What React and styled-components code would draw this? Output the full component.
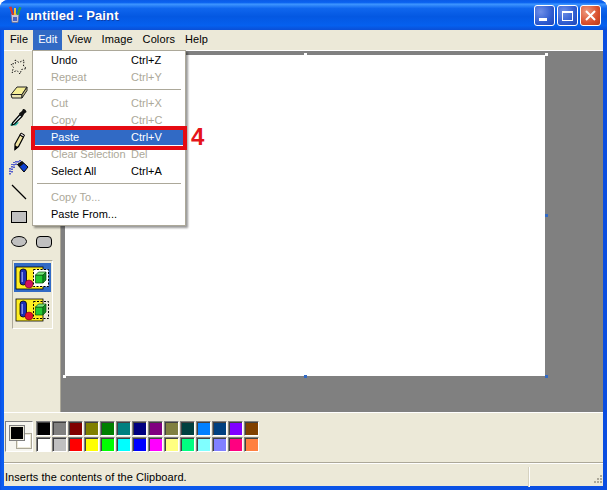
import styled, { createGlobalStyle } from "styled-components";

const GlobalStyle = createGlobalStyle`
  html, body {
    margin: 0;
    background: #fff;
  }
  * {
    box-sizing: border-box;
  }
`;

const Window = styled.div`
  position: relative;
  width: 607px;
  height: 490px;
  display: flex;
  flex-direction: column;
  overflow: hidden;
  border-radius: 8px 8px 0 0;
  font-family: "Liberation Sans", Arial, sans-serif;
  font-size: 11px;
  color: #000;
  background: linear-gradient(90deg, #0a4de0 0, #0a5cf0 2px, #0a4de0 100%);
  padding: 0 4px 4px;
`;

const TitleBar = styled.div`
  height: 30px;
  margin: 0 -4px;
  padding: 0 6px 0 7px;
  display: flex;
  align-items: center;
  gap: 2px;
  background: linear-gradient(
    180deg,
    #0a5be8 0%,
    #0a62f0 8%,
    #3d95ff 14%,
    #0f66ee 28%,
    #0458e2 55%,
    #0560ef 85%,
    #0a4fd6 100%
  );
`;

const Title = styled.span`
  flex: 1;
  margin-left: 1px;
  color: #fff;
  font-size: 13px;
  font-weight: bold;
  letter-spacing: 0.15px;
  text-shadow: 1px 1px 0 #0f3fa8;
`;

const CaptionButton = styled.div`
  width: 21px;
  height: 21px;
  border: 1px solid #fff;
  border-radius: 3px;
  display: flex;
  align-items: center;
  justify-content: center;
  background: ${(p) =>
    p.$close
      ? "radial-gradient(circle at 30% 30%, #ee9a80, #d9502d 60%, #b83a18)"
      : "radial-gradient(circle at 30% 30%, #6f8fe8, #2f5cd0 60%, #2046b8)"};
`;

const MenuBar = styled.div`
  height: 20px;
  display: flex;
  background: #ece9d8;
  padding-left: 1px;
`;

const MenuItem = styled.div`
  height: 20px;
  padding: 0 5px;
  line-height: 19px;
  font-size: 11px;
  letter-spacing: 0.1px;
  color: ${(p) => (p.$active ? "#fff" : "#000")};
  background: ${(p) => (p.$active ? "#316ac5" : "transparent")};
`;

const Workspace = styled.div`
  flex: 1;
  min-height: 0;
  display: flex;
  background: #ece9d8;
  border-top: 1px solid #fff;
`;

const Toolbox = styled.div`
  width: 57px;
  padding: 3px 0 0 2px;
  border-right: 1px solid #aca899;
  display: flex;
  flex-direction: column;
  align-items: flex-start;
`;

const ToolGrid = styled.div`
  display: grid;
  grid-template-columns: 25px 25px;
  grid-auto-rows: 25px;
`;

const Tool = styled.div`
  width: 25px;
  height: 25px;
  display: flex;
  align-items: center;
  justify-content: center;
`;

const OptionsBox = styled.div`
  width: 41px;
  height: 69px;
  margin: 6px 0 0 6px;
  padding: 2px 1px;
  border: 1px solid #aca899;
  border-right-color: #fff;
  border-bottom-color: #fff;
  display: flex;
  flex-direction: column;
  gap: 3px;
`;

const Option = styled.div`
  height: 29px;
  display: flex;
  align-items: center;
  justify-content: center;
  background: ${(p) => (p.$selected ? "#316ac5" : "transparent")};
`;

const CanvasArea = styled.div`
  flex: 1;
  background: #808080;
  padding: 4px 0 0 4px;
`;

const Canvas = styled.div`
  position: relative;
  width: 480px;
  height: 321px;
  background: #fff;
`;

const Handle = styled.span`
  position: absolute;
  width: 3px;
  height: 3px;
  background: ${(p) => (p.$blue ? "#316ac5" : "#fff")};
  left: ${(p) => p.$x}px;
  top: ${(p) => p.$y}px;
`;

const PaletteBar = styled.div`
  height: 50px;
  background: #ece9d8;
  border-top: 1px solid #fff;
  padding: 8px 0 0 1px;
  display: flex;
  gap: 3px;
`;

const CurrentColors = styled.div`
  position: relative;
  width: 28px;
  height: 31px;
  border: 1px solid #808080;
  border-right-color: #fff;
  border-bottom-color: #fff;
  background-color: #f6f5ee;
  background-image: radial-gradient(#d8d5c6 0.5px, transparent 0.7px);
  background-size: 2px 2px;
`;

const ForeColor = styled.div`
  position: absolute;
  left: 4px;
  top: 4px;
  width: 14px;
  height: 14px;
  background: #000;
  border: 1px solid #ece9d8;
  outline: 1px solid #808080;
  z-index: 1;
`;

const BackColor = styled.div`
  position: absolute;
  left: 11px;
  top: 12px;
  width: 14px;
  height: 14px;
  background: #fff;
  border: 1px solid #ece9d8;
  outline: 1px solid #aca899;
`;

const Swatches = styled.div`
  display: grid;
  grid-template-columns: repeat(14, 16px);
  grid-auto-rows: 16px;
`;

const Swatch = styled.div`
  width: 15px;
  height: 15px;
  background: ${(p) => p.$color};
  border: 1px solid #808080;
  border-right-color: #fff;
  border-bottom-color: #fff;
  box-shadow: inset 1px 1px 0 #404040;
`;

const StatusBar = styled.div`
  position: relative;
  height: 24px;
  background: #ece9d8;
  border-top: 1px solid #aca899;
  box-shadow: inset 0 1px 0 #fff;
  display: flex;
  align-items: center;
  padding: 4px 0 0 1px;
  font-size: 11px;
  letter-spacing: 0.05px;
`;

const StatusText = styled.span`
  flex: 1;
`;

const StatusDivider = styled.div`
  width: 1px;
  height: 20px;
  background: #fff;
  margin-right: 73px;
  box-shadow: -1px 0 0 #d6d2c0;
`;

const Grip = styled.svg`
  position: absolute;
  right: 0;
  bottom: 1px;
`;

const DropMenu = styled.div`
  position: absolute;
  left: 32px;
  top: 50px;
  width: 154px;
  height: 176px;
  padding: 0 2px;
  background: #fff;
  border: 1px solid #aca899;
  box-shadow: 2px 2px 2px rgba(0, 0, 0, 0.4);
  z-index: 2;
`;

const DropItem = styled.div`
  height: 17px;
  display: grid;
  grid-template-columns: 80px 1fr;
  align-items: center;
  padding-left: 16px;
  font-size: 11px;
  white-space: nowrap;
  color: ${(p) => (p.$active ? "#fff" : p.$disabled ? "#aca899" : "#000")};
  background: ${(p) => (p.$active ? "#316ac5" : "transparent")};
`;

const DropSeparator = styled.div`
  height: 1px;
  margin: 4px 2px;
  background: #aca899;
`;

const Highlight = styled.div`
  position: absolute;
  left: 31px;
  top: 126px;
  width: 156px;
  height: 24px;
  border: 4px solid #e50a12;
  z-index: 3;
`;

const StepNumber = styled.div`
  position: absolute;
  left: 191px;
  top: 123px;
  font-size: 24px;
  line-height: 28px;
  font-weight: bold;
  color: #e5141a;
  z-index: 3;
`;

const PaintLogo = () => (
  <svg width="16" height="18" viewBox="0 0 16 18">
    <path d="M4 8h8l-1 8.500H5z" fill="#c9c6d8" stroke="#6a6a88" strokeWidth="0.700" />
    <path d="M5 9 2 1l2.500-.5L7 9z" fill="#d9342b" />
    <path d="M7 9V2h2v7z" fill="#f2c230" />
    <path d="M9.500 9 12 1l2.500.5L11.500 9z" fill="#33a045" />
    <path d="M6 11h4v4H6z" fill="#4a62c0" />
  </svg>
);

const SelectIcon = () => (
  <svg width="18" height="18" viewBox="0 0 18 18">
    <path
      d="M5 2l4 2.500L14 2l-.5 6 3 2.500-5 1L10 16l-3-3.500-5 2 1.500-5L1 6l4.500-.5z"
      fill="none"
      stroke="#000"
      strokeWidth="0.900"
      strokeDasharray="1.500 1.500"
    />
  </svg>
);

const EraserIcon = () => (
  <svg width="18" height="14" viewBox="0 0 18 14">
    <path d="M1 9.500 7 2h10l-5 7.500z" fill="#f6ef96" stroke="#222" />
    <path d="M1 9.500h11V13H2z" fill="#ece6b4" stroke="#222" />
    <path d="M12 9.500 17 2v3.500L12 13z" fill="#c9c28c" stroke="#222" />
  </svg>
);

const PickerIcon = () => (
  <svg width="18" height="18" viewBox="0 0 18 18">
    <path d="M0 17.500c1-3.500 4-3.500 9-3l-3 3z" fill="#20b8a4" />
    <path d="M2.500 15 10 6.500l2 2-7.500 7.500-2.500 1z" fill="#e8f6f4" stroke="#000" strokeWidth="1.200" />
    <path d="M9.500 5 12 3l1-2c1.500-.5 3.500 1.500 3.500 3l-2 1.500-1.500 2.500-1 .5-3-3z" fill="#111" />
  </svg>
);

const PencilIcon = () => (
  <svg width="14" height="20" viewBox="0 0 14 20">
    <path d="M3 12 8 3l3.500 2-5 9.500-3.500 3z" fill="#efe2a0" stroke="#000" strokeWidth="1.200" />
    <path d="M8 3l1-2 3.500 2-1 2z" fill="#e8e0e0" stroke="#000" />
    <path d="M2.500 18.500l.5-5 3 1.500z" fill="#000" />
  </svg>
);

const SprayIcon = () => (
  <svg width="20" height="16" viewBox="0 0 20 16">
    <path
      d="M1 15.500V8M3 13.500V5M5 9V3M7 6V1.500M9 3.500V1M11 2.500V1"
      stroke="#2430c8"
      strokeWidth="1.500"
      strokeDasharray="1.500 1"
    />
    <path d="M8.500 5.500 13 2.500l6 5.500-4 5z" fill="#0c3fd0" stroke="#000" />
    <path d="M8.500 5.500 13 2.500l2 2-4.500 3.500z" fill="#111" />
  </svg>
);

const LineIcon = () => (
  <svg width="16" height="16" viewBox="0 0 16 16">
    <path d="M1 1l14 14" stroke="#000" strokeWidth="1.300" />
  </svg>
);

const RectIcon = () => (
  <svg width="16" height="12" viewBox="0 0 16 12">
    <rect x="0.500" y="0.500" width="15" height="11" fill="#c0c0c0" stroke="#000" />
  </svg>
);

const EllipseIcon = () => (
  <svg width="16" height="11" viewBox="0 0 16 11">
    <ellipse cx="8" cy="5.500" rx="7.500" ry="5" fill="#c0c0c0" stroke="#000" />
  </svg>
);

const RoundRectIcon = () => (
  <svg width="16" height="12" viewBox="0 0 16 12">
    <rect x="0.500" y="0.500" width="15" height="11" rx="3.500" fill="#c0c0c0" stroke="#000" />
  </svg>
);

const TransparencyIcon = ({ dashed }) => (
  <svg width="36" height="26" viewBox="0 0 36 26">
    <rect x="1" y="2" width="27" height="22" fill="#ffee22" stroke="#000" strokeWidth="0.800" />
    <rect x="5" y="4" width="6.500" height="16" rx="3" fill="#1c2fb4" stroke="#000" strokeWidth="0.800" />
    <rect x="6.500" y="7" width="1.500" height="10" fill="#8090e8" />
    <circle cx="14" cy="19" r="4" fill={dashed ? "#e01030" : "#d01060"} stroke="#600" strokeWidth="0.500" />
    <rect
      x="18.500"
      y="4.500"
      width="15"
      height="17"
      fill={dashed ? "none" : "#fff"}
      stroke="#000"
      strokeWidth="1"
      strokeDasharray="2 1.500"
    />
    <path d="M20.500 10h7.500v8h-7.500z" fill="#22c832" stroke="#0a5010" strokeWidth="0.700" />
    <path d="M20.500 10l3-3H31l-3 3z" fill="#7ee87e" stroke="#0a5010" strokeWidth="0.700" />
    <path d="M28 10l3-3v8l-3 3z" fill="#109020" stroke="#0a5010" strokeWidth="0.700" />
  </svg>
);

const TOP_COLORS = [
  "#000000", "#808080", "#800000", "#808000", "#008000", "#008080", "#000080",
  "#800080", "#808040", "#004040", "#0080ff", "#004080", "#8000ff", "#804000",
];

const BOTTOM_COLORS = [
  "#ffffff", "#c0c0c0", "#ff0000", "#ffff00", "#00ff00", "#00ffff", "#0000ff",
  "#ff00ff", "#ffff80", "#00ff80", "#80ffff", "#8080ff", "#ff0080", "#ff8040",
];

const HANDLES = [
  { x: -2, y: -2 },
  { x: 239, y: -2 },
  { x: 480, y: -2 },
  { x: 480, y: 159, blue: true },
  { x: -2, y: 320 },
  { x: 239, y: 320, blue: true },
  { x: 480, y: 320, blue: true },
  { x: -2, y: 159, blue: true },
];

function EditMenu() {
  return (
    <DropMenu>
      <DropItem>
        <span>Undo</span>
        <span>Ctrl+Z</span>
      </DropItem>
      <DropItem $disabled>
        <span>Repeat</span>
        <span>Ctrl+Y</span>
      </DropItem>
      <DropSeparator />
      <DropItem $disabled>
        <span>Cut</span>
        <span>Ctrl+X</span>
      </DropItem>
      <DropItem $disabled>
        <span>Copy</span>
        <span>Ctrl+C</span>
      </DropItem>
      <DropItem $active>
        <span>Paste</span>
        <span>Ctrl+V</span>
      </DropItem>
      <DropItem $disabled>
        <span>Clear Selection</span>
        <span>Del</span>
      </DropItem>
      <DropItem>
        <span>Select All</span>
        <span>Ctrl+A</span>
      </DropItem>
      <DropSeparator />
      <DropItem $disabled>
        <span>Copy To...</span>
      </DropItem>
      <DropItem>
        <span>Paste From...</span>
      </DropItem>
    </DropMenu>
  );
}

export default function App() {
  return (
    <>
      <GlobalStyle />
      <Window>
        <TitleBar>
          <PaintLogo />
          <Title>untitled - Paint</Title>
          <CaptionButton>
            <svg width="13" height="13" viewBox="0 0 13 13">
              <rect x="1" y="9" width="8" height="3" fill="#fff" />
            </svg>
          </CaptionButton>
          <CaptionButton>
            <svg width="13" height="13" viewBox="0 0 13 13">
              <rect x="1.500" y="2.500" width="10" height="9" fill="none" stroke="#fff" />
              <rect x="1" y="2" width="11" height="2" fill="#fff" />
            </svg>
          </CaptionButton>
          <CaptionButton $close>
            <svg width="13" height="13" viewBox="0 0 13 13">
              <path d="M2 2l9 9M11 2l-9 9" stroke="#fff" strokeWidth="2" />
            </svg>
          </CaptionButton>
        </TitleBar>

        <MenuBar>
          <MenuItem>File</MenuItem>
          <MenuItem $active>Edit</MenuItem>
          <MenuItem>View</MenuItem>
          <MenuItem>Image</MenuItem>
          <MenuItem>Colors</MenuItem>
          <MenuItem>Help</MenuItem>
        </MenuBar>

        <Workspace>
          <Toolbox>
            <ToolGrid>
              <Tool><SelectIcon /></Tool>
              <Tool />
              <Tool><EraserIcon /></Tool>
              <Tool />
              <Tool><PickerIcon /></Tool>
              <Tool />
              <Tool><PencilIcon /></Tool>
              <Tool />
              <Tool><SprayIcon /></Tool>
              <Tool />
              <Tool><LineIcon /></Tool>
              <Tool />
              <Tool><RectIcon /></Tool>
              <Tool />
              <Tool><EllipseIcon /></Tool>
              <Tool><RoundRectIcon /></Tool>
            </ToolGrid>
            <OptionsBox>
              <Option $selected><TransparencyIcon /></Option>
              <Option><TransparencyIcon dashed /></Option>
            </OptionsBox>
          </Toolbox>
          <CanvasArea>
            <Canvas>
              {HANDLES.map((h) => (
                <Handle key={`${h.x}-${h.y}`} $x={h.x} $y={h.y} $blue={h.blue} />
              ))}
            </Canvas>
          </CanvasArea>
        </Workspace>

        <PaletteBar>
          <CurrentColors>
            <ForeColor />
            <BackColor />
          </CurrentColors>
          <Swatches>
            {TOP_COLORS.map((c) => (
              <Swatch key={c} $color={c} />
            ))}
            {BOTTOM_COLORS.map((c) => (
              <Swatch key={c} $color={c} />
            ))}
          </Swatches>
        </PaletteBar>

        <StatusBar>
          <StatusText>Inserts the contents of the Clipboard.</StatusText>
          <StatusDivider />
          <Grip width="12" height="12" viewBox="0 0 12 12">
            <path d="M9 2h2v2H9zM6 5h2v2H6zM9 5h2v2H9zM3 8h2v2H3zM6 8h2v2H6zM9 8h2v2H9z" fill="#aca899" />
          </Grip>
        </StatusBar>

        <EditMenu />
        <Highlight />
        <StepNumber>4</StepNumber>
      </Window>
    </>
  );
}
